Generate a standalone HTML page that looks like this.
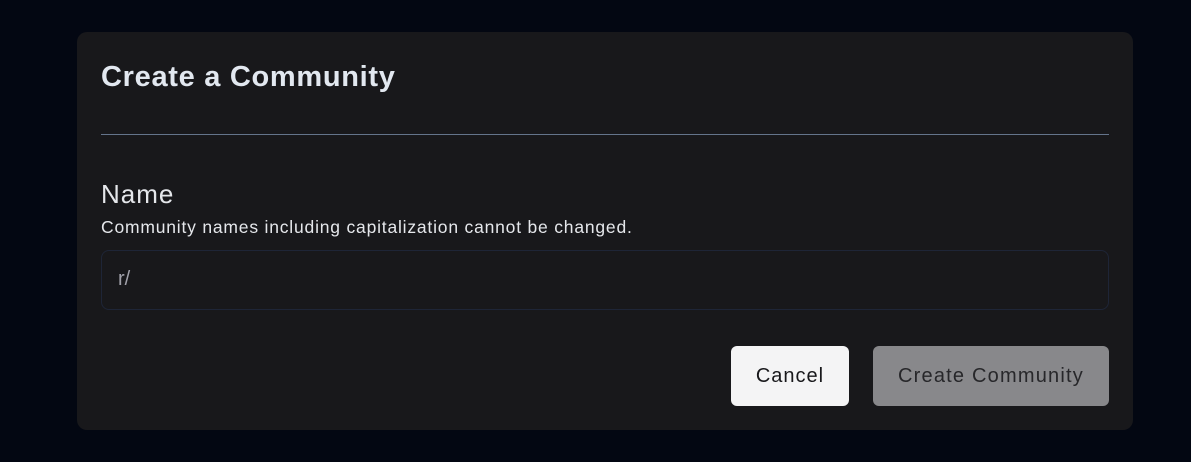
<!DOCTYPE html>
<html><head><style>
body{margin:0;width:1191px;height:462px;background:#030712;font-family:"Liberation Sans",sans-serif;position:relative;overflow:hidden}
.card{position:absolute;left:77px;top:32px;width:1056px;height:398px;background:#18181b;border-radius:10px}
.t{position:absolute;left:24px;top:29px;font-size:29px;letter-spacing:0.7px;font-weight:bold;color:#e2e8f0;margin:0}
.hr{position:absolute;left:24px;top:102px;width:1008px;height:1px;background:#64748b}
.n{position:absolute;left:24px;top:147px;font-size:26px;letter-spacing:1px;color:#e5e7eb}
.s{position:absolute;left:24px;top:185px;font-size:17.5px;letter-spacing:0.8px;color:#e5e7eb}
.in{position:absolute;left:24px;top:218px;width:1006px;height:58px;border:1px solid #1e2537;border-radius:8px;box-sizing:content-box}
.in span{position:absolute;left:16px;top:17px;font-size:20px;color:#a1a1aa}
.b{position:absolute;top:314px;height:60px;border-radius:6px;font-size:20px;display:flex;align-items:center;justify-content:center}
.c{left:654px;width:118px;background:#f4f4f5;color:#18181b;letter-spacing:1px}
.cc{left:796px;width:236px;background:#88888b;color:#27272a;letter-spacing:1.2px}
</style></head><body>
<div class="card">
<div class="t">Create a Community</div>
<div class="hr"></div>
<div class="n">Name</div>
<div class="s">Community names including capitalization cannot be changed.</div>
<div class="in"><span>r/</span></div>
<div class="b c">Cancel</div>
<div class="b cc">Create Community</div>
</div>
</body></html>
